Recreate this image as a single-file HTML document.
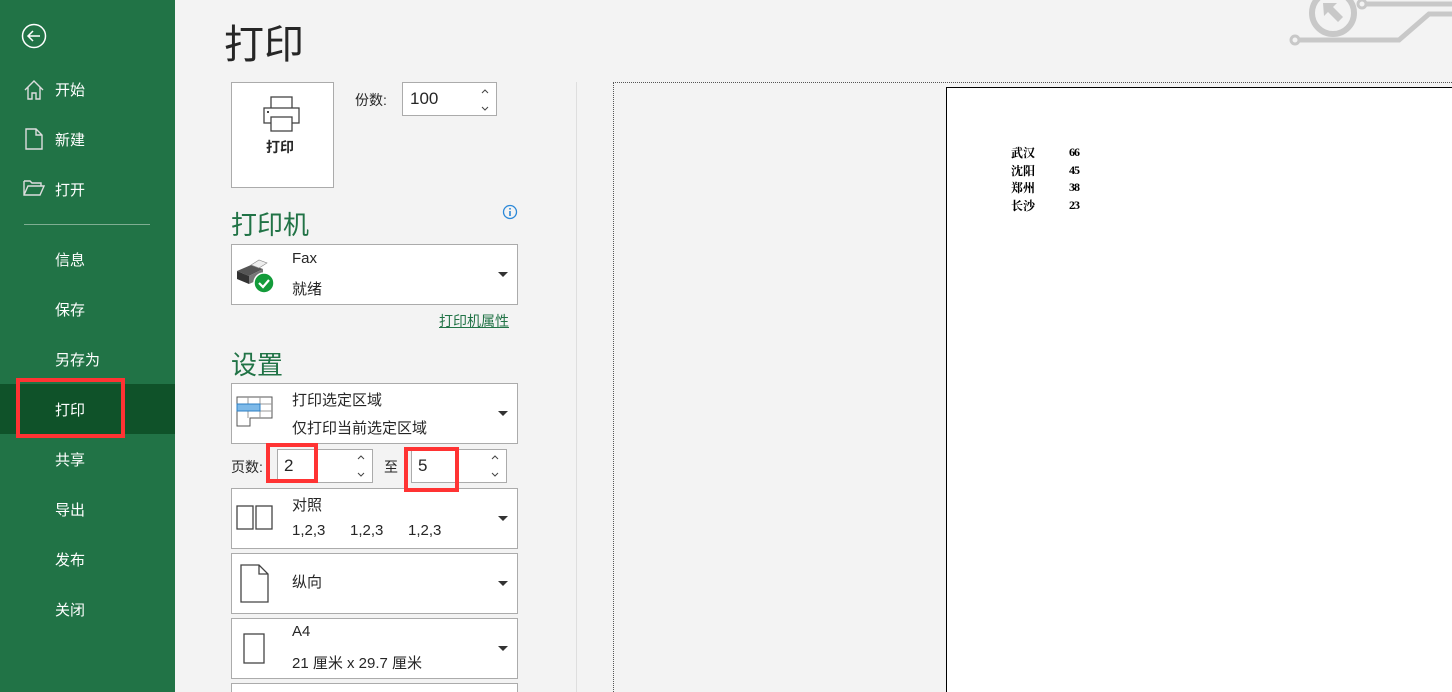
<!DOCTYPE html>
<html><head><meta charset="utf-8"><style>
*{margin:0;padding:0;box-sizing:border-box}
html,body{width:1452px;height:692px;overflow:hidden}
body{background:#f3f3f3;font-family:"Liberation Sans","Noto Sans CJK SC",sans-serif;position:relative;color:#262626}
.a{position:absolute}
#side{left:0;top:0;width:175px;height:692px;background:#217346;color:#fff}
.ni{position:absolute;left:55px;font-size:15px;color:#fff}
.box{position:absolute;background:#fff;border:1px solid #ababab}
.dd{position:absolute;right:9px;width:0;height:0;border-left:5px solid transparent;border-right:5px solid transparent;border-top:5px solid #333}
.t{position:absolute;font-size:15px;color:#262626}
.green{color:#217346}
.red{position:absolute;border:4px solid #f33;z-index:10}
</style></head><body>
<div id="side" class="a">
<svg class="a" style="left:19px;top:22px" width="30" height="30" viewBox="0 0 30 30"><circle cx="15" cy="14" r="11.5" fill="none" stroke="#fff" stroke-width="1.5"/><path d="M21 14H9M14 9l-5 5 5 5" fill="none" stroke="#fff" stroke-width="1.5"/></svg>
<svg class="a" style="left:23px;top:79px" width="22" height="22" viewBox="0 0 22 22"><path d="M2 11L11 2l9 9M5 8v12h4v-6h4v6h4V8" fill="none" stroke="#ddd" stroke-width="1.4"/></svg>
<div class="ni" style="top:79px">开始</div>
<svg class="a" style="left:25px;top:128px" width="18" height="22" viewBox="0 0 18 22"><path d="M1 1h10l6 6v14H1zM11 1v6h6" fill="none" stroke="#ddd" stroke-width="1.4"/></svg>
<div class="ni" style="top:129px">新建</div>
<svg class="a" style="left:23px;top:179px" width="22" height="18" viewBox="0 0 22 18"><path d="M1 2h6l2 2h9v3M1 2v14h16l4-9H5l-4 9" fill="none" stroke="#ddd" stroke-width="1.4"/></svg>
<div class="ni" style="top:179px">打开</div>
<div class="a" style="left:24px;top:224px;width:126px;height:1px;background:#7fae92"></div>
<div class="ni" style="top:249px">信息</div>
<div class="ni" style="top:299px">保存</div>
<div class="ni" style="top:349px">另存为</div>
<div class="a" style="left:0;top:384px;width:175px;height:50px;background:#0f5229"></div>
<div class="ni" style="top:399px">打印</div>
<div class="ni" style="top:449px">共享</div>
<div class="ni" style="top:499px">导出</div>
<div class="ni" style="top:549px">发布</div>
<div class="ni" style="top:599px">关闭</div>
</div>
<div class="red" style="left:16px;top:378px;width:109px;height:60px"></div>

<div class="a" style="left:224px;top:12px;font-size:40px;color:#262626">打印</div>
<svg class="a" style="left:1285px;top:0" width="167" height="48" viewBox="0 0 167 48"><circle cx="48" cy="13" r="21" fill="none" stroke="#c8c8c8" stroke-width="6"/><path d="M38 3l14 0-4 4 10 10-5 5-10-10-4 4z" fill="#c8c8c8"/><circle cx="10" cy="40" r="4" fill="none" stroke="#c8c8c8" stroke-width="3"/><path d="M14 40h100l30-26h23" fill="none" stroke="#c8c8c8" stroke-width="5"/><circle cx="77" cy="4" r="4" fill="none" stroke="#c8c8c8" stroke-width="3"/><path d="M81 4h86" stroke="#c8c8c8" stroke-width="5"/></svg>

<div class="box" style="left:231px;top:82px;width:103px;height:106px"></div>
<svg class="a" style="left:263px;top:96px" width="38" height="38" viewBox="0 0 38 38"><rect x="8" y="1" width="21" height="12" fill="#fff" stroke="#444" stroke-width="1.3"/><rect x="1" y="12" width="35" height="15" fill="#fff" stroke="#444" stroke-width="1.3"/><rect x="8" y="21" width="21" height="14" fill="#fff" stroke="#444" stroke-width="1.3"/><rect x="4" y="15" width="2" height="2" fill="#444"/></svg>
<div class="t" style="left:266px;top:137px;font-size:14px;font-weight:bold">打印</div>
<div class="t" style="left:355px;top:90px;font-size:14px">份数:</div>
<div class="box" style="left:402px;top:82px;width:95px;height:34px"></div>
<div class="t" style="left:410px;top:89px;font-size:17px">100</div>
<svg class="a" style="left:480px;top:88px" width="10" height="24" viewBox="0 0 10 24"><path d="M2 5l3-3 3 3M2 19l3 3 3-3" fill="none" stroke="#444" stroke-width="1"/></svg>

<div class="a green" style="left:231px;top:205px;font-size:26px">打印机</div>
<svg class="a" style="left:502px;top:204px" width="16" height="16" viewBox="0 0 16 16"><circle cx="8" cy="8" r="6.5" fill="none" stroke="#2b88d8" stroke-width="1.3"/><rect x="7.2" y="7" width="1.6" height="5" fill="#2b88d8"/><rect x="7.2" y="4" width="1.6" height="1.6" fill="#2b88d8"/></svg>
<div class="box" style="left:231px;top:244px;width:287px;height:61px"><div class="dd" style="top:27px"></div></div>
<svg class="a" style="left:235px;top:259px" width="40" height="36" viewBox="0 0 40 36"><path d="M2 12l14-6 12 4-14 7z" fill="#555"/><path d="M2 12v8l12 5v-8z" fill="#333"/><path d="M14 17l14-7v9l-14 6z" fill="#777"/><path d="M16 6l8-5 8 3-8 5z" fill="#eee" stroke="#888" stroke-width=".6"/><circle cx="29" cy="24" r="10" fill="#139b3a" stroke="#fff" stroke-width="1.5"/><path d="M24 24l4 4 6-7" fill="none" stroke="#fff" stroke-width="2.2"/></svg>
<div class="t" style="left:292px;top:250px">Fax</div>
<div class="t" style="left:292px;top:278px">就绪</div>
<div class="a green" style="left:439px;top:311px;font-size:14px;text-decoration:underline">打印机属性</div>

<div class="a" style="left:576px;top:82px;width:1px;height:610px;background:#dedede"></div>

<div class="a green" style="left:231px;top:345px;font-size:26px">设置</div>
<div class="box" style="left:231px;top:383px;width:287px;height:61px"><div class="dd" style="top:27px"></div></div>
<svg class="a" style="left:236px;top:396px" width="38" height="34" viewBox="0 0 38 34"><path d="M1 1h35v21H14v8H1z" fill="#fff" stroke="#555" stroke-width="1"/><path d="M1 8h35M1 15h35M12 1v21M24 1v21" stroke="#999" stroke-width="1"/><rect x="1" y="8" width="23" height="7" fill="#7db9e8" stroke="#2d7fc3"/></svg>
<div class="t" style="left:292px;top:389px">打印选定区域</div>
<div class="t" style="left:292px;top:417px">仅打印当前选定区域</div>

<div class="t" style="left:231px;top:457px;font-size:14px">页数:</div>
<div class="box" style="left:277px;top:449px;width:96px;height:34px"></div>
<div class="t" style="left:284px;top:456px;font-size:17px">2</div>
<svg class="a" style="left:356px;top:454px" width="10" height="24" viewBox="0 0 10 24"><path d="M2 5l3-3 3 3M2 19l3 3 3-3" fill="none" stroke="#444" stroke-width="1"/></svg>
<div class="t" style="left:384px;top:457px;font-size:14px">至</div>
<div class="box" style="left:411px;top:449px;width:96px;height:34px"></div>
<div class="t" style="left:418px;top:456px;font-size:17px">5</div>
<svg class="a" style="left:490px;top:454px" width="10" height="24" viewBox="0 0 10 24"><path d="M2 5l3-3 3 3M2 19l3 3 3-3" fill="none" stroke="#444" stroke-width="1"/></svg>

<div class="box" style="left:231px;top:488px;width:287px;height:61px"><div class="dd" style="top:27px"></div></div>
<svg class="a" style="left:236px;top:505px" width="38" height="26" viewBox="0 0 38 26"><rect x="1" y="1" width="16" height="23" fill="#fff" stroke="#444" stroke-width="1.3"/><rect x="20" y="1" width="16" height="23" fill="#fff" stroke="#444" stroke-width="1.3"/></svg>
<div class="t" style="left:292px;top:494px">对照</div>
<div class="t" style="left:292px;top:522px">1,2,3</div><div class="t" style="left:350px;top:522px">1,2,3</div><div class="t" style="left:408px;top:522px">1,2,3</div>

<div class="box" style="left:231px;top:553px;width:287px;height:61px"><div class="dd" style="top:27px"></div></div>
<svg class="a" style="left:240px;top:564px" width="30" height="40" viewBox="0 0 30 40"><path d="M1 1h18l9 9v28H1zM19 1v9h9" fill="#fff" stroke="#444" stroke-width="1.3"/></svg>
<div class="t" style="left:292px;top:571px">纵向</div>

<div class="box" style="left:231px;top:618px;width:287px;height:61px"><div class="dd" style="top:27px"></div></div>
<svg class="a" style="left:243px;top:633px" width="24" height="32" viewBox="0 0 24 32"><rect x="1" y="1" width="20" height="29" fill="#fff" stroke="#444" stroke-width="1.3"/></svg>
<div class="t" style="left:292px;top:623px">A4</div>
<div class="t" style="left:292px;top:652px">21 厘米 x 29.7 厘米</div>
<div class="box" style="left:231px;top:683px;width:287px;height:20px"></div>

<div class="red" style="left:266px;top:443px;width:52px;height:40px"></div>
<div class="red" style="left:404px;top:447px;width:55px;height:45px"></div>

<div class="a" style="left:613px;top:82px;width:839px;height:610px;border-top:1px dotted #555;border-left:1px dotted #555;background:#f3f3f3"></div>
<div class="a" style="left:946px;top:87px;width:506px;height:605px;background:#fff;border-left:1px solid #000;border-top:1px solid #000"></div>
<div class="a" style="left:1011px;top:144px;font-family:'Noto Serif CJK SC','Liberation Serif',serif;font-size:12px;font-weight:bold;line-height:17.5px;color:#000">武汉<br>沈阳<br>郑州<br>长沙</div>
<div class="a" style="left:1069px;top:144px;font-family:'Liberation Serif',serif;font-size:12px;font-weight:bold;line-height:17.5px;color:#000;letter-spacing:-1px">66<br>45<br>38<br>23</div>
</body></html>
